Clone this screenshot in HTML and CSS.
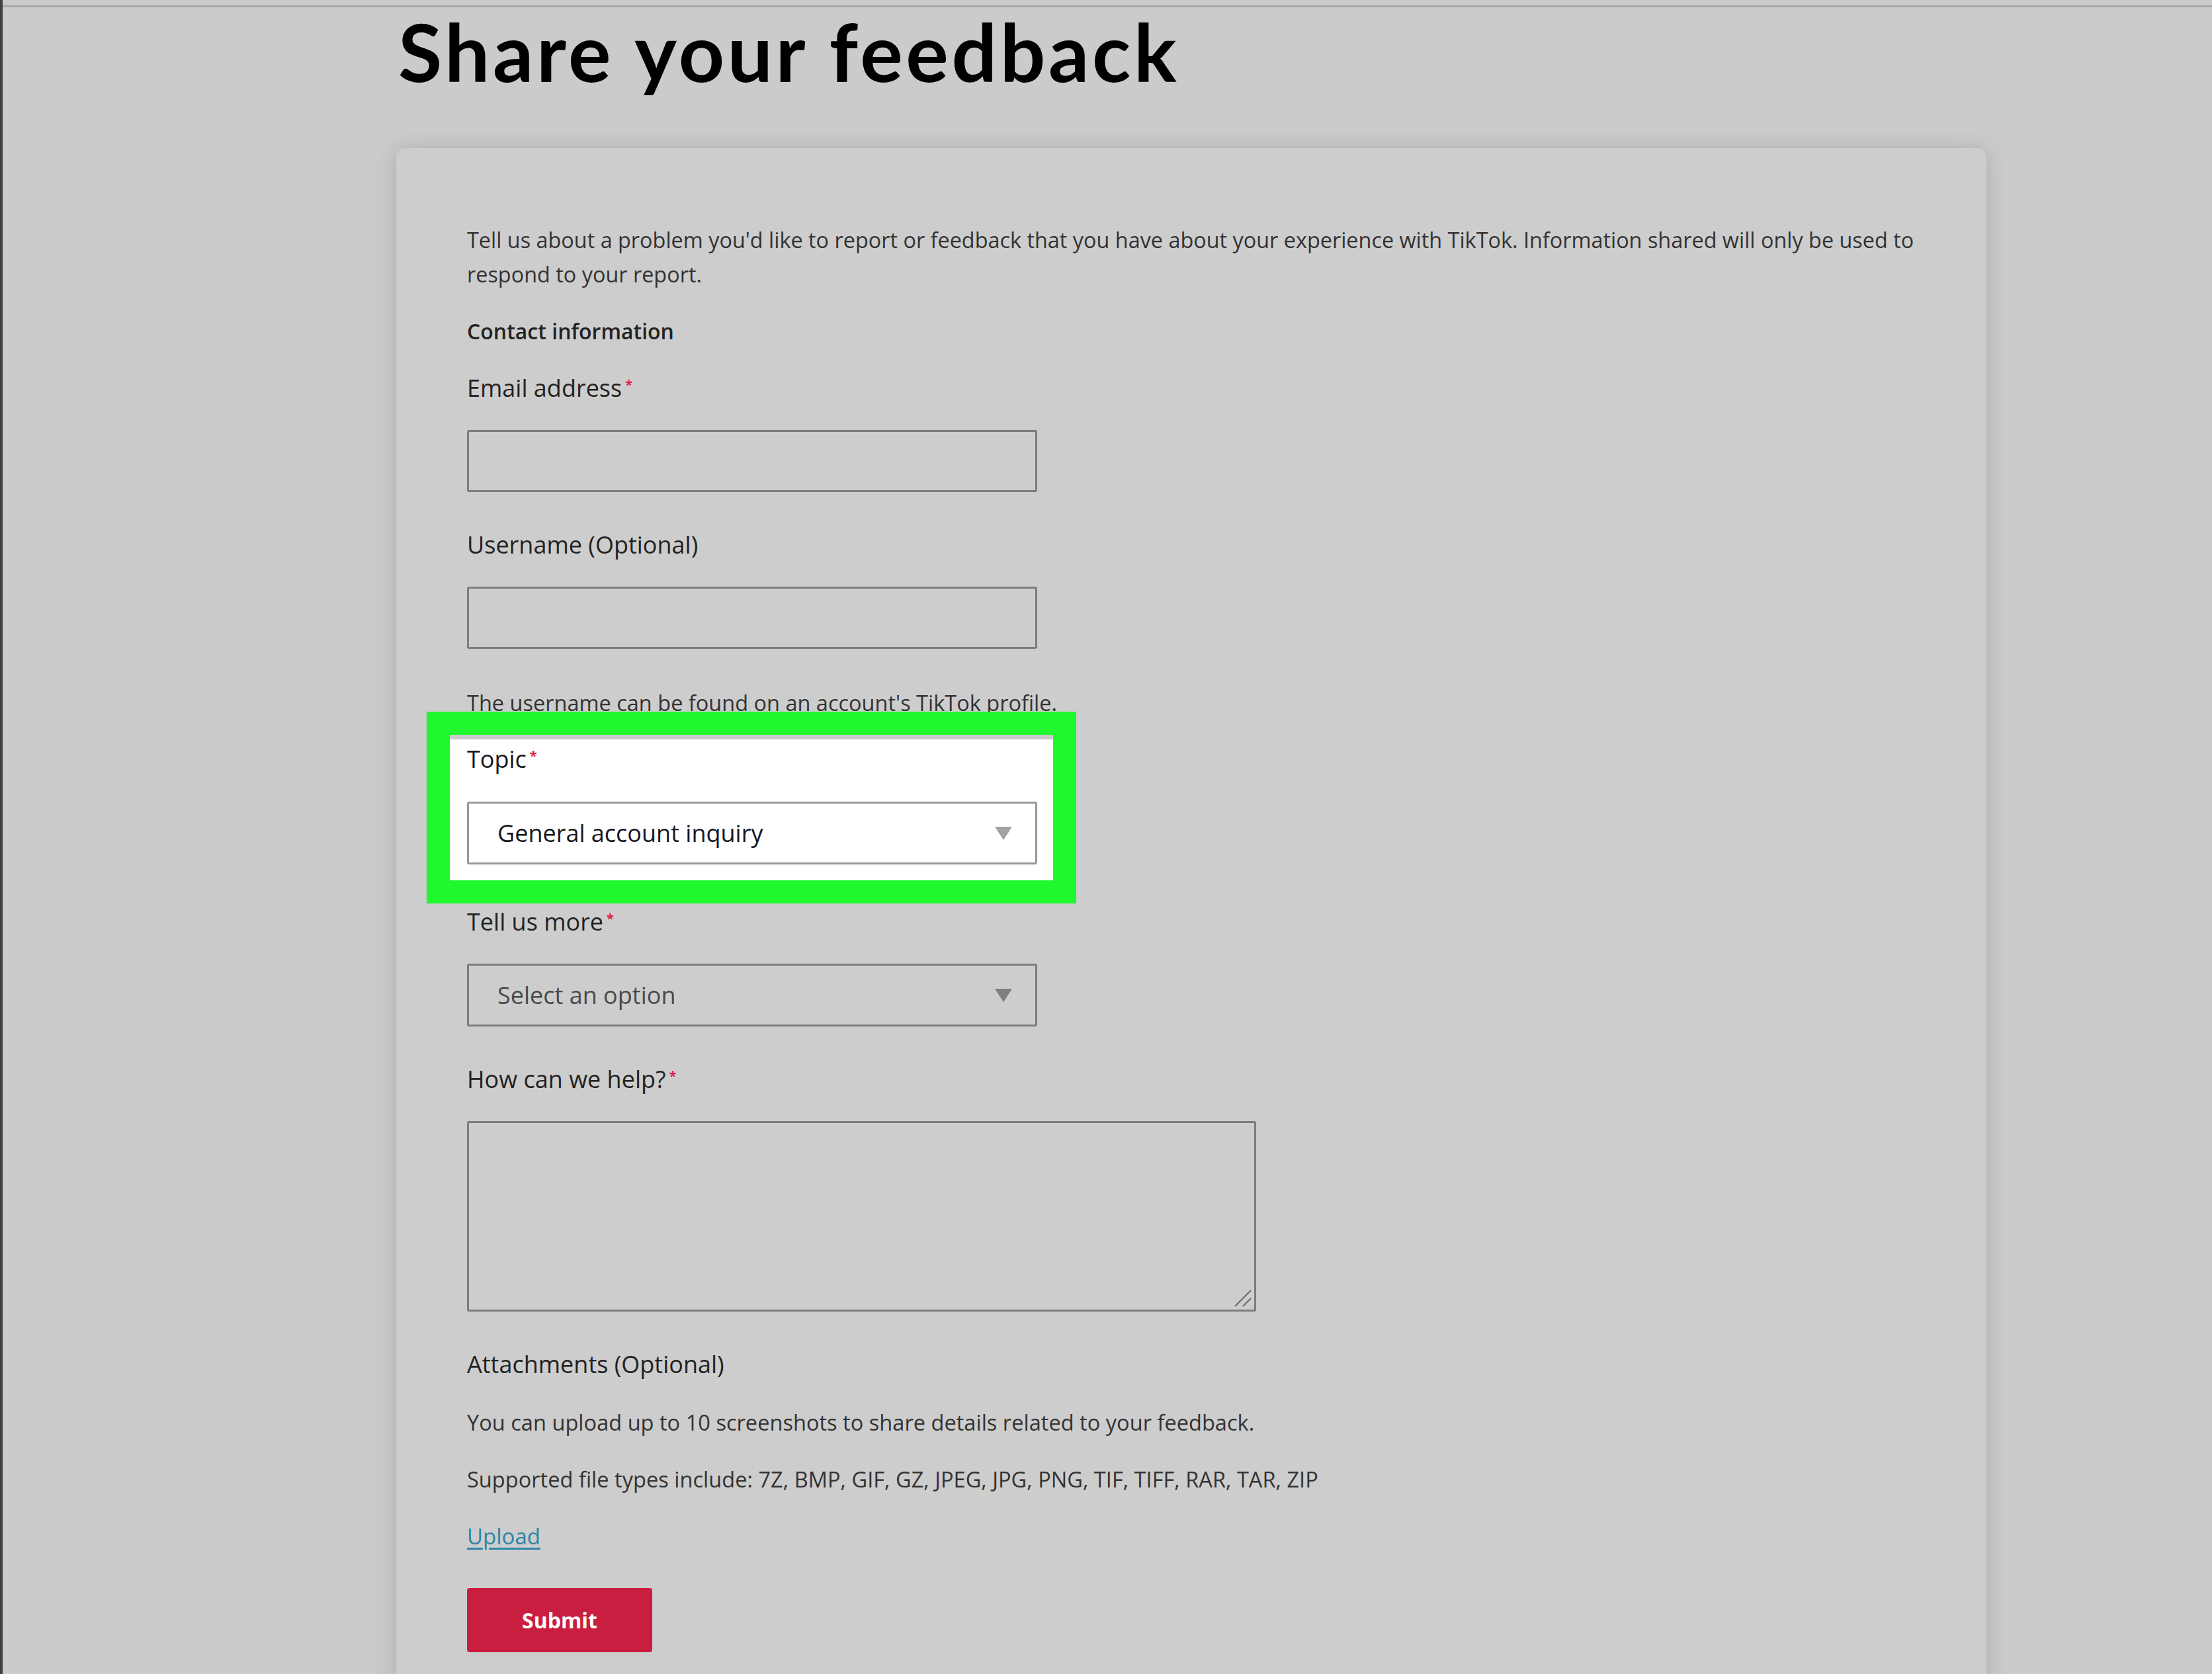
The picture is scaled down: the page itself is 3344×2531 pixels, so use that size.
FILE: index.html
```html
<!DOCTYPE html>
<html lang="en">
<head>
    <meta charset="UTF-8">
    <meta name="viewport" content="width=device-width, initial-scale=1.0">
    <title>Share your feedback</title>
    <link rel="stylesheet" href="styles.css">
</head>

<body>
    <div class="frame">
        <div class="topline"></div>

        <div class="content">
            <h1 class="title">Share your feedback</h1>

            <div class="card">
                <p class="intro">Tell us about a problem you'd like to report or feedback that you have about your experience with TikTok. Information shared will only be used to respond to your report.</p>

                <h4 class="section-title">Contact information</h4>

                <div class="field field-first">
                    <label class="label" for="email">Email address<span class="req">*</span></label>
                    <input class="input" type="email" id="email">
                </div>

                <div class="field">
                    <label class="label" for="username">Username (Optional)</label>
                    <input class="input" type="text" id="username">
                </div>
                <p class="hint">The username can be found on an account's TikTok profile.</p>

                <!-- highlighted field -->
                <div class="highlight">
                    <div class="label">Topic<span class="req">*</span></div>
                    <div class="select select-filled">
                        <span>General account inquiry</span>
                        <svg class="caret" width="28" height="22" viewBox="0 0 28 22"><path d="M1 1 H27 L14 21 Z" fill="#a1a1a6"/></svg>
                    </div>
                </div>

                <div class="field field-after">
                    <div class="label">Tell us more<span class="req">*</span></div>
                    <div class="select">
                        <span class="placeholder">Select an option</span>
                        <svg class="caret" width="28" height="22" viewBox="0 0 28 22"><path d="M1 1 H27 L14 21 Z" fill="#808084"/></svg>
                    </div>
                </div>

                <div class="field">
                    <label class="label" for="help">How can we help?<span class="req">*</span></label>
                    <div class="textarea-wrap">
                        <textarea class="textarea" id="help"></textarea>
                        <svg class="grip" width="30" height="30" viewBox="0 0 30 30">
                            <path d="M4 28 L28 4 M16 28 L28 16" stroke="#6e6e72" stroke-width="2.2"/>
                        </svg>
                    </div>
                </div>

                <div class="field">
                    <div class="label">Attachments (Optional)</div>
                    <p class="note">You can upload up to 10 screenshots to share details related to your feedback.</p>
                    <p class="note">Supported file types include: 7Z, BMP, GIF, GZ, JPEG, JPG, PNG, TIF, TIFF, RAR, TAR, ZIP</p>
                    <p class="note"><a class="upload" href="#">Upload</a></p>
                </div>

                <button class="submit">Submit</button>
            </div>
        </div>
    </div>
</body>
</html>
```

FILE: styles.css
```css
body {
    margin: 0;
    background-color: #cbcbcb;
    font-family: "Open Sans", Lato, sans-serif;
    color: #222;
}
.frame {
    border-left: 4px solid #404040;
    min-height: 2531px;
    box-sizing: border-box;
    padding-top: 8px;
    overflow: hidden;
}
.topline {
    height: 3px;
    background-color: #a4a9a9;
}
.content {
    margin-left: 595px;
    width: 2404px;
}
.title {
    margin: 6px 0 0 3px;
    font-family: Lato, sans-serif;
    font-size: 121px;
    line-height: 121px;
    font-weight: 700;
    color: #000;
    letter-spacing: 4.6px;
}
.card {
    margin-top: 86px;
    padding: 112px 60px 140px 107px;
    background-color: #cdcdcd;
    border-radius: 14px;
    box-shadow: 0 2px 30px rgba(80, 92, 92, 0.28);
}
.intro {
    margin: 0;
    font-size: 32.4px;
    line-height: 52px;
    color: #333;
}
.section-title {
    margin: 35px 0 0;
    font-size: 32px;
    line-height: 52px;
    font-weight: 600;
    color: #222;
}
.field {
    margin-top: 54px;
}
.field-first {
    margin-top: 34px;
}
.field-after {
    margin-top: 37px;
}
.label {
    display: block;
    font-size: 36px;
    line-height: 52px;
    color: #222;
    margin-bottom: 37px;
}
.req {
    color: #e01b45;
    font-size: 20px;
    font-weight: 700;
    vertical-align: top;
    line-height: 41px;
    margin-left: 5px;
}
.input {
    display: block;
    width: 862px;
    height: 94px;
    box-sizing: border-box;
    border: 3px solid #7c7c80;
    border-radius: 3px;
    background: transparent;
    font-family: inherit;
    font-size: 36px;
}
.hint {
    margin: 56px 0 0;
    font-size: 32.5px;
    line-height: 52px;
    color: #333;
}

/* un-dimmed field with the green annotation frame */
.highlight {
    width: 912px;
    margin: 22px 0 0 -26px;
    padding: 4px 24px 24px 26px;
    box-sizing: border-box;
    background-color: #fff;
    border-top: 7px solid #cbcbcb;
    outline: 35px solid #1ff72e;
}
.highlight .label {
    color: #161823;
    margin-bottom: 38px;
}
.select {
    display: flex;
    align-items: center;
    justify-content: space-between;
    width: 862px;
    height: 95px;
    box-sizing: border-box;
    padding: 0 34px 0 43px;
    border: 3px solid #7c7c80;
    border-radius: 3px;
    font-size: 36px;
}
.select-filled {
    border-color: #97979c;
    color: #161823;
}
.placeholder {
    color: #4a4a4a;
}
.caret {
    display: block;
}
.textarea-wrap {
    position: relative;
    width: 1193px;
}
.textarea {
    display: block;
    width: 100%;
    height: 288px;
    box-sizing: border-box;
    border: 3px solid #7c7c80;
    border-radius: 3px;
    background: transparent;
    resize: none;
    font-family: inherit;
    font-size: 36px;
}
.grip {
    position: absolute;
    right: 6px;
    bottom: 6px;
}
.note {
    margin: 34px 0 0;
    font-size: 32.6px;
    line-height: 52px;
    color: #333;
}
.field .label + .note {
    margin-top: -1px;
}
.upload {
    color: #2b86a6;
    font-size: 33px;
    text-decoration: underline;
    text-underline-offset: 5px;
    text-decoration-thickness: 3px;
}
.submit {
    display: block;
    margin-top: 52px;
    width: 280px;
    height: 97px;
    border: none;
    border-radius: 4px;
    background-color: #c91e3f;
    color: #fff;
    font-family: inherit;
    font-size: 32px;
    font-weight: 700;
    cursor: pointer;
}
```
